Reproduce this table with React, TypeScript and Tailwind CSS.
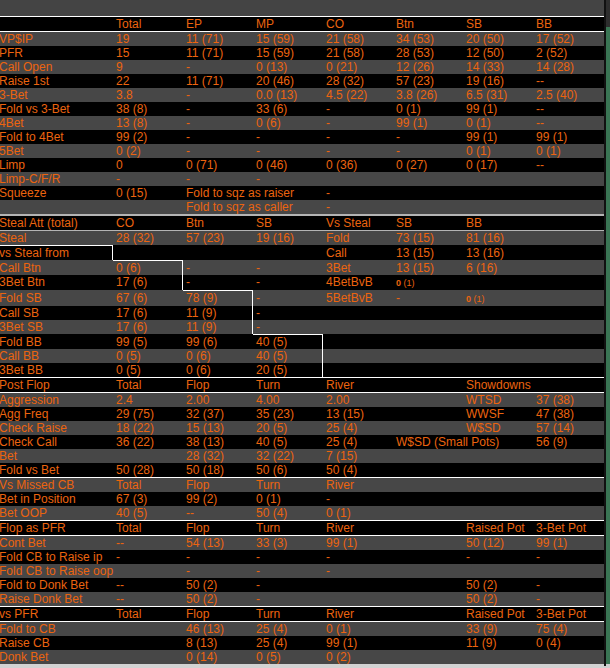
import type { ReactNode } from "react";

type Cell = ReactNode;

const GRAY = "bg-[#474747]";

function Row({ cells, gray }: { cells: Cell[]; gray?: boolean }) {
  return (
    <div className={`flex h-[14px] leading-[14px] ${gray ? GRAY : "bg-black"}`}>
      <div className="-ml-px w-[114px] shrink-0 whitespace-nowrap">{cells[0]}</div>
      {[1, 2, 3, 4, 5, 6, 7].map((i) => (
        <div key={i} className="w-[70px] shrink-0 whitespace-nowrap pl-[3px]">
          {cells[i] ?? ""}
        </div>
      ))}
    </div>
  );
}

// steal block: top = cell that carries the white step line, right = cell with the white side line
function StealRow({
  cells,
  gray,
  top,
  right,
}: {
  cells: Cell[];
  gray?: boolean;
  top?: number;
  right?: number;
}) {
  const hasTop = top !== undefined;
  return (
    <div className={`flex leading-[14px] ${gray ? GRAY : "bg-black"}`}>
      {[0, 1, 2, 3, 4, 5, 6].map((i) => {
        const w = i === 0 ? "-ml-px w-[114px] pl-0" : "w-[70px] pl-[3px]";
        const t = hasTop ? (i === top ? "border-t border-white" : "border-t border-transparent") : "";
        const r = i === right ? "border-r border-white" : "";
        return (
          <div key={i} className={`${w} ${t} ${r} shrink-0 whitespace-nowrap`}>
            {cells[i] ?? ""}
          </div>
        );
      })}
      <div className="w-[70px] shrink-0" />
    </div>
  );
}

const Line = () => <div className="h-px bg-white" />;

const Tiny = () => (
  <span className="text-[9px]">
    <span className="font-bold">0</span> (1)
  </span>
);

const preflop: Cell[][] = [
  ["VP$IP", "19", "11 (71)", "15 (59)", "21 (58)", "34 (53)", "20 (50)", "17 (52)"],
  ["PFR", "15", "11 (71)", "15 (59)", "21 (58)", "28 (53)", "12 (50)", "2 (52)"],
  ["Call Open", "9", "-", "0 (13)", "0 (21)", "12 (26)", "14 (33)", "14 (28)"],
  ["Raise 1st", "22", "11 (71)", "20 (46)", "28 (32)", "57 (23)", "19 (16)", "--"],
  ["3-Bet", "3.8", "-", "0.0 (13)", "4.5 (22)", "3.8 (26)", "6.5 (31)", "2.5 (40)"],
  ["Fold vs 3-Bet", "38 (8)", "-", "33 (6)", "-", "0 (1)", "99 (1)", "--"],
  ["4Bet", "13 (8)", "-", "0 (6)", "-", "99 (1)", "0 (1)", "--"],
  ["Fold to 4Bet", "99 (2)", "-", "-", "-", "-", "99 (1)", "99 (1)"],
  ["5Bet", "0 (2)", "-", "-", "-", "-", "0 (1)", "0 (1)"],
  ["Limp", "0", "0 (71)", "0 (46)", "0 (36)", "0 (27)", "0 (17)", "--"],
  ["Limp-C/F/R", "-", "-", "-"],
  ["Squeeze", "0 (15)", "Fold to sqz as raiser", "", "-"],
  ["", "", "Fold to sqz as caller", "", "-"],
];

const postflop: Cell[][] = [
  ["Aggression", "2.4", "2.00", "4.00", "2.00", "", "WTSD", "37 (38)"],
  ["Agg Freq", "29 (75)", "32 (37)", "35 (23)", "13 (15)", "", "WWSF", "47 (38)"],
  ["Check Raise", "18 (22)", "15 (13)", "20 (5)", "25 (4)", "", "W$SD", "57 (14)"],
  ["Check Call", "36 (22)", "38 (13)", "40 (5)", "25 (4)", "W$SD (Small Pots)", "", "56 (9)"],
  ["Bet", "", "28 (32)", "32 (22)", "7 (15)"],
  ["Fold vs Bet", "50 (28)", "50 (18)", "50 (6)", "50 (4)"],
];

const asPfr: Cell[][] = [
  ["Cont Bet", "--", "54 (13)", "33 (3)", "99 (1)", "", "50 (12)", "99 (1)"],
  ["Fold CB to Raise ip", "-", "-", "-", "-", "", "-", "-"],
  ["Fold CB to Raise oop", "", "-", "-", "-"],
  ["Fold to Donk Bet", "--", "50 (2)", "-", "", "", "50 (2)", "-"],
  ["Raise Donk Bet", "--", "50 (2)", "-", "", "", "50 (2)", "-"],
];

const vsPfr: Cell[][] = [
  ["Fold to CB", "", "46 (13)", "25 (4)", "0 (1)", "", "33 (9)", "75 (4)"],
  ["Raise CB", "", "8 (13)", "25 (4)", "99 (1)", "", "11 (9)", "0 (4)"],
  ["Donk Bet", "", "0 (14)", "0 (5)", "0 (2)"],
];

export default function App() {
  return (
    <div
      className="flex h-[668px] w-[610px] overflow-hidden bg-[#cfcfcf] text-[12px] text-[#ec640f]"
      style={{ fontFamily: '"Liberation Sans", Arial, sans-serif' }}
    >
      <div className="flex w-[604px] shrink-0 flex-col">
        <div className="h-[17px] bg-[#444444]" />
        <Line />
        <Row cells={["", "Total", "EP", "MP", "CO", "Btn", "SB", "BB"]} />
        <Line />
        {preflop.map((r, i) => (
          <Row key={i} cells={r} gray={i % 2 === 0} />
        ))}

        <div className="h-[2px] bg-[#b4b4b4]" />
        <StealRow cells={["Steal Att (total)", "CO", "Btn", "SB", "Vs Steal", "SB", "BB"]} />
        <div className="h-px bg-[#b4b4b4]" />
        <StealRow gray cells={["Steal", "28 (32)", "57 (23)", "19 (16)", "Fold", "73 (15)", "81 (16)"]} />
        <StealRow top={0} right={0} cells={["vs Steal from", "", "", "", "Call", "13 (15)", "13 (16)"]} />
        <StealRow gray top={1} right={1} cells={["Call Btn", "0 (6)", "-", "-", "3Bet", "13 (15)", "6 (16)"]} />
        <StealRow right={1} cells={["3Bet Btn", "17 (6)", "-", "-", "4BetBvB", <Tiny key="t" />, ""]} />
        <StealRow gray top={2} right={2} cells={["Fold SB", "67 (6)", "78 (9)", "-", "5BetBvB", "-", <Tiny key="t" />]} />
        <StealRow right={2} cells={["Call SB", "17 (6)", "11 (9)", "-"]} />
        <StealRow gray right={2} cells={["3Bet SB", "17 (6)", "11 (9)", "-"]} />
        <StealRow top={3} right={3} cells={["Fold BB", "99 (5)", "99 (6)", "40 (5)"]} />
        <StealRow gray right={3} cells={["Call BB", "0 (5)", "0 (6)", "40 (5)"]} />
        <StealRow right={3} cells={["3Bet BB", "0 (5)", "0 (6)", "20 (5)"]} />
        <Line />

        <Row cells={["Post Flop", "Total", "Flop", "Turn", "River", "", "Showdowns"]} />
        <Line />
        {postflop.map((r, i) => (
          <Row key={i} cells={r} gray={i % 2 === 0} />
        ))}
        <Line />
        <Row gray cells={["Vs Missed CB", "Total", "Flop", "Turn", "River"]} />
        <Line />
        <Row cells={["Bet in Position", "67 (3)", "99 (2)", "0 (1)", "-"]} />
        <Row gray cells={["Bet OOP", "40 (5)", "--", "50 (4)", "0 (1)"]} />
        <Line />
        <Row cells={["Flop as PFR", "Total", "Flop", "Turn", "River", "", "Raised Pot", "3-Bet Pot"]} />
        <Line />
        {asPfr.map((r, i) => (
          <Row key={i} cells={r} gray={i % 2 === 0} />
        ))}
        <Line />
        <Row cells={["vs PFR", "Total", "Flop", "Turn", "River", "", "Raised Pot", "3-Bet Pot"]} />
        <Line />
        {vsPfr.map((r, i) => (
          <Row key={i} cells={r} gray={i % 2 === 0} />
        ))}

        {/* window underneath */}
        <div className="h-[4px] bg-[#d2d2d2]" />
      </div>

      <div className="flex w-[6px] shrink-0">
        <div className="h-[666px] w-[2px] bg-[#111111]" />
        <div className="flex w-[4px] flex-col">
          <div className="h-[27px] bg-[#2e2e2e]" />
          <div className="h-[637px] bg-[#3a7554]" />
          <div className="flex-1 bg-[#cfcfcf]" />
        </div>
      </div>
    </div>
  );
}
